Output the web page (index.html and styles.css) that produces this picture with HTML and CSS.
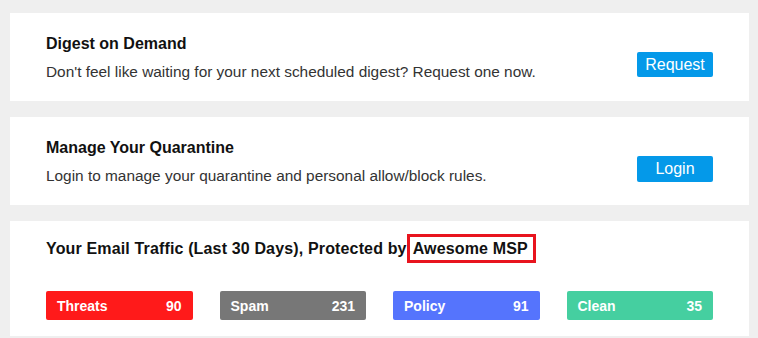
FILE: index.html
```html
<!DOCTYPE html>
<html lang="en">
<head>
    <meta charset="UTF-8">
    <meta name="viewport" content="width=device-width, initial-scale=1.0">
    <title>Quarantine Digest</title>
    <link rel="stylesheet" href="styles.css">
</head>
<body>
    <div class="page">
        <div class="card card-action">
            <div class="card-text">
                <h2 class="card-title">Digest on Demand</h2>
                <p class="card-desc">Don't feel like waiting for your next scheduled digest? Request one now.</p>
            </div>
            <button class="btn">Request</button>
        </div>

        <div class="card card-action">
            <div class="card-text">
                <h2 class="card-title">Manage Your Quarantine</h2>
                <p class="card-desc">Login to manage your quarantine and personal allow/block rules.</p>
            </div>
            <button class="btn">Login</button>
        </div>

        <div class="card card-traffic">
            <h2 class="card-title traffic-title">Your Email Traffic (Last 30 Days), Protected by<span class="msp">Awesome MSP</span></h2>
            <div class="stats">
                <div class="stat stat-threats"><span>Threats</span><span>90</span></div>
                <div class="stat stat-spam"><span>Spam</span><span>231</span></div>
                <div class="stat stat-policy"><span>Policy</span><span>91</span></div>
                <div class="stat stat-clean"><span>Clean</span><span>35</span></div>
            </div>
        </div>
    </div>
</body>
</html>
```

FILE: styles.css
```css
body {
    font-family: "Liberation Sans", Arial, sans-serif;
    margin: 0;
    background-color: #efefef;
    color: #111;
}
.page {
    padding: 13px 9px 0 10px;
    display: flex;
    flex-direction: column;
    gap: 16px;
}
.card {
    background-color: white;
    padding: 0 36px;
}
.card-action {
    height: 88px;
    display: flex;
    align-items: center;
    justify-content: space-between;
}
.card-text {
    padding-top: 1px;
}
.card-title {
    margin: 0;
    font-size: 16px;
    font-weight: bold;
}
.card-desc {
    margin: 10px 0 0;
    font-size: 15.4px;
    color: #333;
}
.btn {
    width: 76px;
    height: 25px;
    margin-top: 15px;
    border: none;
    border-radius: 2px;
    background-color: #0499e9;
    color: white;
    font-family: inherit;
    font-size: 16px;
    padding: 0;
    cursor: pointer;
}
.card-action + .card-action .btn {
    height: 26px;
}
.card-traffic {
    height: 115px;
    padding-top: 13px;
    box-sizing: border-box;
}
.traffic-title {
    letter-spacing: 0.15px;
    line-height: 29px;
}
.msp {
    border: 3px solid #e8141e;
    padding: 3px 5px 3px 3px;
}
.stats {
    margin-top: 28px;
    display: grid;
    grid-template-columns: repeat(4, 1fr);
    column-gap: 27px;
}
.stat {
    height: 29px;
    border-radius: 2px;
    display: flex;
    align-items: center;
    justify-content: space-between;
    padding: 0 11px;
    color: white;
    font-size: 14px;
    font-weight: bold;
}
.stat-threats {
    background-color: #ff1a1a;
}
.stat-spam {
    background-color: #777777;
}
.stat-policy {
    background-color: #5574fd;
}
.stat-clean {
    background-color: #45cfa0;
}
```
